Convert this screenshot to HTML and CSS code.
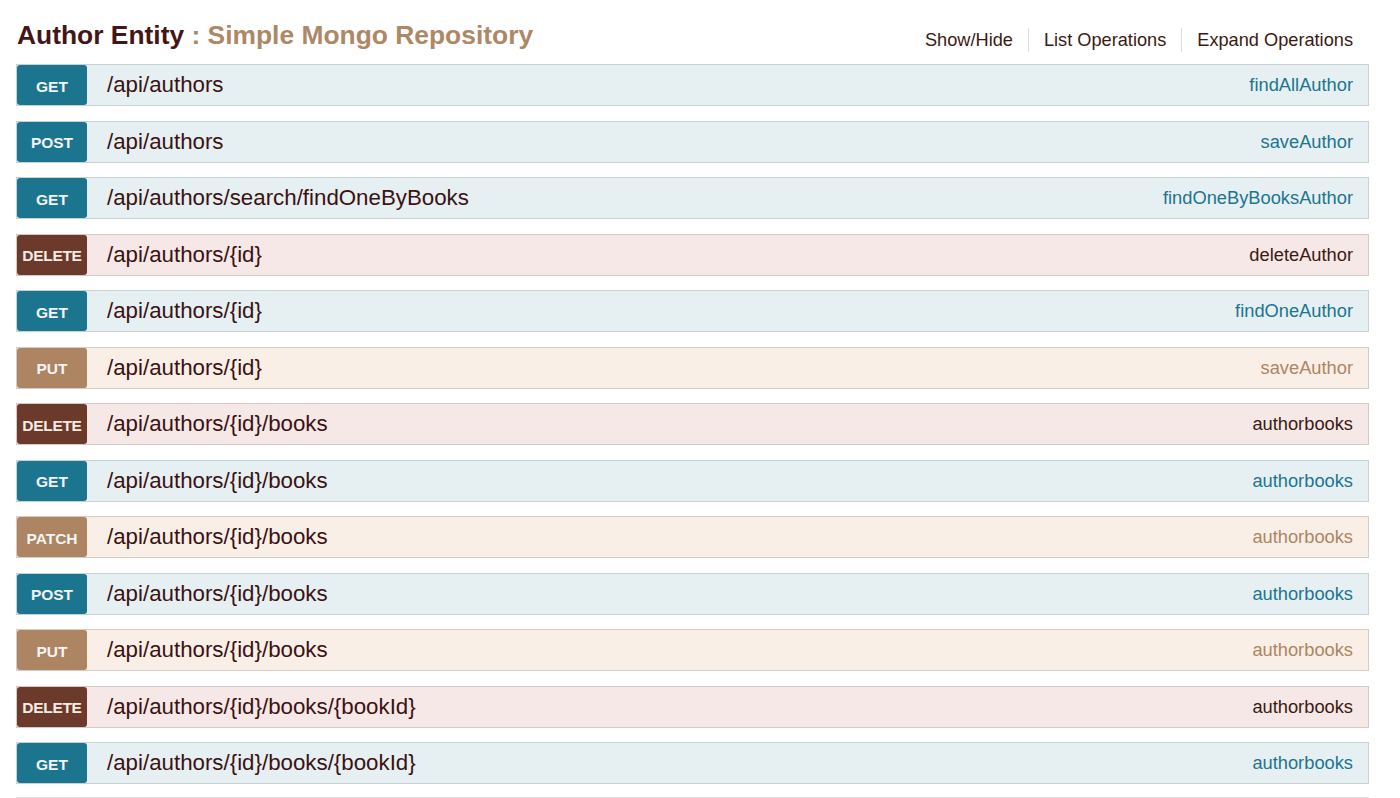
FILE: index.html
```html
<!DOCTYPE html>
<html>
<head>
<meta charset="utf-8">
<link rel="stylesheet" href="styles.css">
</head>
<body>
<div class="page">
  <div class="header">
    <h2 class="title">Author Entity <span class="sub">: Simple Mongo Repository</span></h2>
    <ul class="links">
      <li class="link">Show/Hide</li>
      <li class="link sep">List Operations</li>
      <li class="link sep last">Expand Operations</li>
    </ul>
  </div>
  <div class="ops">
    <div class="op get"><span class="badge">GET</span><span class="path">/api/authors</span><span class="name">findAllAuthor</span></div>
    <div class="op get"><span class="badge">POST</span><span class="path">/api/authors</span><span class="name">saveAuthor</span></div>
    <div class="op get"><span class="badge">GET</span><span class="path">/api/authors/search/findOneByBooks</span><span class="name">findOneByBooksAuthor</span></div>
    <div class="op delete"><span class="badge">DELETE</span><span class="path">/api/authors/{id}</span><span class="name">deleteAuthor</span></div>
    <div class="op get"><span class="badge">GET</span><span class="path">/api/authors/{id}</span><span class="name">findOneAuthor</span></div>
    <div class="op put"><span class="badge">PUT</span><span class="path">/api/authors/{id}</span><span class="name">saveAuthor</span></div>
    <div class="op delete"><span class="badge">DELETE</span><span class="path">/api/authors/{id}/books</span><span class="name">authorbooks</span></div>
    <div class="op get"><span class="badge">GET</span><span class="path">/api/authors/{id}/books</span><span class="name">authorbooks</span></div>
    <div class="op put"><span class="badge">PATCH</span><span class="path">/api/authors/{id}/books</span><span class="name">authorbooks</span></div>
    <div class="op get"><span class="badge">POST</span><span class="path">/api/authors/{id}/books</span><span class="name">authorbooks</span></div>
    <div class="op put"><span class="badge">PUT</span><span class="path">/api/authors/{id}/books</span><span class="name">authorbooks</span></div>
    <div class="op delete"><span class="badge">DELETE</span><span class="path">/api/authors/{id}/books/{bookId}</span><span class="name">authorbooks</span></div>
    <div class="op get"><span class="badge">GET</span><span class="path">/api/authors/{id}/books/{bookId}</span><span class="name">authorbooks</span></div>
  </div>
  <div class="divider"></div>
</div>
</body>
</html>
```

FILE: styles.css
```css
html, body {
  margin: 0;
  padding: 0;
  background: #ffffff;
}
body {
  font-family: "Liberation Sans", Arial, Helvetica, sans-serif;
  color: #3b1414;
}
.page {
  padding: 20px 31px 0 16px;
}
.header {
  display: flex;
  justify-content: space-between;
  align-items: flex-end;
  margin-bottom: 14px;
}
.title {
  margin: 0;
  padding-left: 1px;
  font-size: 26.4px;
  line-height: 30px;
  font-weight: bold;
  color: #431717;
}
.sub {
  color: #ad8866;
}
.links {
  display: flex;
  list-style: none;
  margin: 0 0 -2px 0;
  padding: 0;
}
.link {
  font-size: 18.2px;
  line-height: 20px;
  padding: 2px 15px 2px 15px;
  color: #3b1a12;
}
.link.sep {
  border-left: 1px solid #dddddd;
}
.link.last {
  padding-right: 16px;
}
.ops {
  display: flex;
  flex-direction: column;
  gap: 14.5px;
}
.op {
  display: flex;
  align-items: center;
  height: 42px;
  box-sizing: border-box;
  border: 1px solid #c9cfd0;
}
.badge {
  width: 70px;
  height: 40px;
  box-sizing: border-box;
  padding-top: 3px;
  flex: none;
  display: flex;
  align-items: center;
  justify-content: center;
  border-radius: 3px;
  font-size: 15.5px;
  font-weight: bold;
  color: #f4f4f4;
}
.path {
  flex: 1;
  padding-left: 20px;
  font-size: 22.3px;
  color: #3b1212;
}
.name {
  padding-right: 15px;
  font-size: 18.3px;
}
.get {
  background: #e6f0f2;
  border-color: #c6d2d4;
}
.get .badge {
  background: #1c758f;
}
.get .name {
  color: #1c758f;
}
.delete {
  background: #f5e8e6;
  border-color: #d4c9c7;
}
.delete .badge {
  background: #6b3a2b;
  color: #f6ece2;
  letter-spacing: -0.3px;
}
.delete .name {
  color: #3b1a12;
}
.put {
  background: #faefe7;
  border-color: #d6ccc4;
}
.put .badge {
  background: #ad8562;
}
.put .name {
  color: #ad8562;
}
.divider {
  margin-top: 13px;
  border-top: 1px solid #e2e2e2;
}
```
